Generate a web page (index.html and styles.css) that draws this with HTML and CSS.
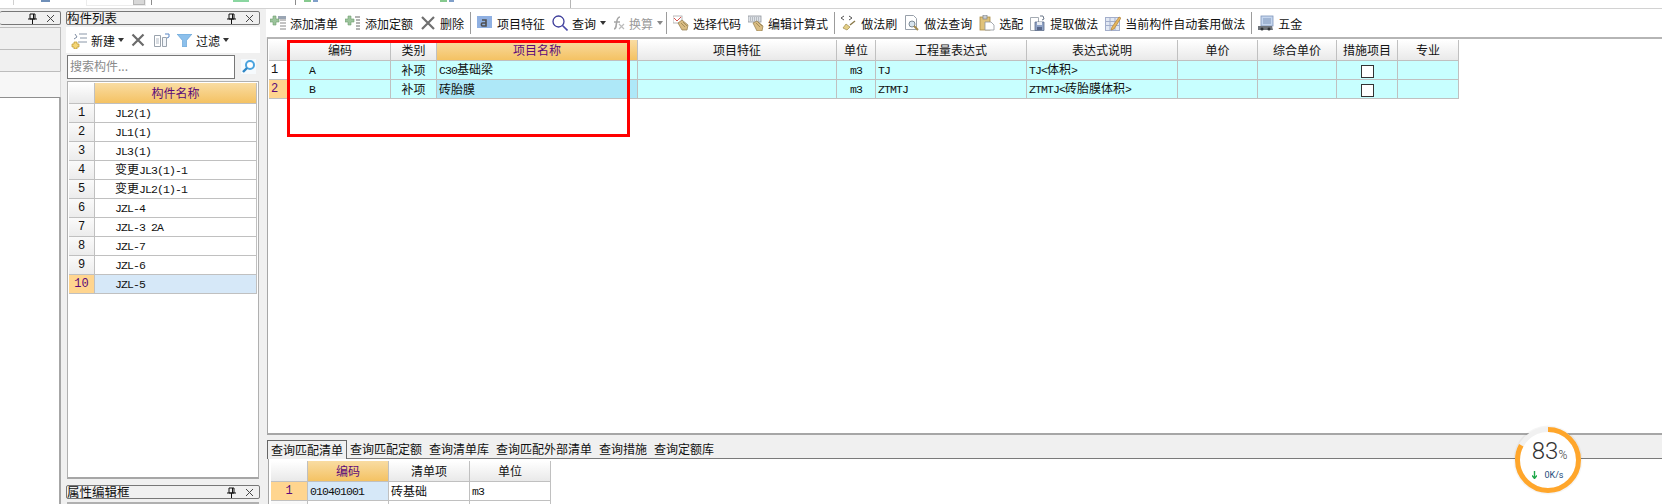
FILE: index.html
```html
<!DOCTYPE html>
<html>
<head>
    <title>构件做法</title>
    <link rel="stylesheet" href="styles.css">
</head>
<body>
    <div class="top-strip">
        <span class="strip-line strip-a"></span>
        <span class="strip-blob strip-b"></span>
        <span class="strip-box strip-c"><span class="strip-btn"></span></span>
        <span class="strip-line strip-d"></span>
        <span class="strip-green strip-e"></span>
        <span class="strip-line strip-f"></span>
        <span class="strip-mini strip-g"></span>
        <span class="strip-mini strip-h"></span>
        <span class="strip-line strip-i"></span>
    </div>

    <div class="workspace">
        <!-- left dock -->
        <div class="side-left">
            <div class="title-bar">
                <span class="title-text"></span>
                <svg class="pin" width="9" height="11" viewBox="0 0 9 11"><path d="M2 1h5v5H2zM0 6h9M4.5 6v5M5.5 1v5" fill="none" stroke="#111" stroke-width="1"/></svg>
                <svg class="close" width="9" height="9" viewBox="0 0 9 9"><path d="M1 1l7 7M8 1L1 8" stroke="#444" stroke-width="1"/></svg>
            </div>
            <div class="side-band"></div>
            <div class="side-band"></div>
            <div class="side-light"></div>
            <div class="side-white"></div>
        </div>

        <!-- component list -->
        <div class="list-panel">
            <div class="title-bar">
                <span class="title-text">构件列表</span>
                <svg class="pin" width="9" height="11" viewBox="0 0 9 11"><path d="M2 1h5v5H2zM0 6h9M4.5 6v5M5.5 1v5" fill="none" stroke="#111" stroke-width="1"/></svg>
                <svg class="close" width="9" height="9" viewBox="0 0 9 9"><path d="M1 1l7 7M8 1L1 8" stroke="#444" stroke-width="1"/></svg>
            </div>
            <div class="list-tools">
                <svg class="tool-new" width="17" height="17" viewBox="0 0 17 17">
                    <path d="M8 2h8M9 6h7M7 10h9" stroke="#8a97a8" fill="none"/>
                    <path d="M4 2l2 3-3 2" stroke="#7d8ba0" fill="none"/>
                    <path d="M3 10h3v2h2v3H6v2H3v-2H1v-3h2z" fill="#f5d676" stroke="#b9952e" stroke-width="0.7"/>
                </svg>
                <span class="tool-label">新建</span>
                <span class="arrow list-arrow"></span>
                <svg class="tool-x" width="14" height="14" viewBox="0 0 14 14"><path d="M1.5 1.5l11 11M12.5 1.5l-11 11" stroke="#6b6b6b" stroke-width="2.2"/></svg>
                <svg class="tool-copy" width="16" height="14" viewBox="0 0 16 14">
                    <path d="M.5 2.5h6v11h-6z" fill="#fff" stroke="#9aa3ad"/>
                    <path d="M2 6h3M2 8h3M2 10h3" stroke="#b4bcc6"/>
                    <path d="M8.5 4.5h4v9h-4z" fill="#f3f6fa" stroke="#9aa3ad"/>
                    <path d="M11 1h4v3l-2 1" fill="none" stroke="#5a87c5"/>
                </svg>
                <svg class="tool-filter" width="15" height="13" viewBox="0 0 15 13"><path d="M0 0h15L9.5 6.5V13h-4V6.5z" fill="#8cc0ec" stroke="#5a9bd0" stroke-width="0.6"/></svg>
                <span class="tool-label">过滤</span>
                <span class="arrow list-arrow"></span>
            </div>
            <div class="search-row">
                <div class="search-input">搜索构件...</div>
                <svg class="search-icon" width="15" height="15" viewBox="0 0 15 15"><rect width="15" height="15" fill="#f6fafd"/><circle cx="9" cy="6" r="4" fill="#fff" stroke="#4aa3de" stroke-width="2"/><path d="M6 9l-4 4" stroke="#2f86c5" stroke-width="2.4"/></svg>
            </div>
            <div class="list-box">
                <table class="grid list-grid">
                    <colgroup><col class="w26"><col class="w162"></colgroup>
                    <tr class="head"><th></th><th class="on">构件名称</th></tr>
                    <tr><td class="num mid">1</td><td class="name"><span class="m">JL2(1)</span></td></tr>
                    <tr><td class="num mid">2</td><td class="name"><span class="m">JL1(1)</span></td></tr>
                    <tr><td class="num mid">3</td><td class="name"><span class="m">JL3(1)</span></td></tr>
                    <tr><td class="num mid">4</td><td class="name">变更<span class="m">JL3(1)-1</span></td></tr>
                    <tr><td class="num mid">5</td><td class="name">变更<span class="m">JL2(1)-1</span></td></tr>
                    <tr><td class="num mid">6</td><td class="name"><span class="m">JZL-4</span></td></tr>
                    <tr><td class="num mid">7</td><td class="name"><span class="m">JZL-3 2A</span></td></tr>
                    <tr><td class="num mid">8</td><td class="name"><span class="m">JZL-7</span></td></tr>
                    <tr><td class="num mid">9</td><td class="name"><span class="m">JZL-6</span></td></tr>
                    <tr class="picked"><td class="num mid cur">10</td><td class="name sel"><span class="m">JZL-5</span></td></tr>
                </table>
            </div>
            <div class="title-bar title-low">
                <span class="title-text">属性编辑框</span>
                <svg class="pin" width="9" height="11" viewBox="0 0 9 11"><path d="M2 1h5v5H2zM0 6h9M4.5 6v5M5.5 1v5" fill="none" stroke="#111" stroke-width="1"/></svg>
                <svg class="close" width="9" height="9" viewBox="0 0 9 9"><path d="M1 1l7 7M8 1L1 8" stroke="#444" stroke-width="1"/></svg>
            </div>
            <div class="props-box"></div>
        </div>

        <!-- main area -->
        <div class="main">
            <div class="toolbar">
                <div class="tool">
                    <svg width="16" height="16" viewBox="0 0 16 16"><path d="M10 5h6M10 8h6M10 11h6M10 14h6" stroke="#888"/><rect x="8" y="1" width="8" height="3" fill="#9aa5b3"/><path d="M3 1h3v3h3v3H6v3H3V7H0V4h3z" fill="#9cc49c" stroke="#6f9f6f" stroke-width="0.6"/></svg>
                    <span>添加清单</span>
                </div>
                <div class="tool">
                    <svg width="16" height="16" viewBox="0 0 16 16"><path d="M10 2h5M11 5h4M11 8h4M11 11h4M11 14h4" stroke="#666"/><path d="M3 1h3v3h3v3H6v3H3V7H0V4h3z" fill="#9cc49c" stroke="#6f9f6f" stroke-width="0.6"/></svg>
                    <span>添加定额</span>
                </div>
                <div class="tool">
                    <svg width="16" height="16" viewBox="0 0 16 16"><path d="M2 2l12 12M14 2L2 14" stroke="#707070" stroke-width="2.2"/></svg>
                    <span>删除</span>
                </div>
                <i class="sep"></i>
                <div class="tool">
                    <svg width="16" height="16" viewBox="0 0 16 16"><rect y="1" width="15" height="12" fill="#8fb0e2"/><path d="M5 5h4v6H5.500C4 11 4 8 5.500 8H9" fill="none" stroke="#4f4f4f" stroke-width="1.6"/></svg>
                    <span>项目特征</span>
                </div>
                <div class="tool">
                    <svg width="16" height="16" viewBox="0 0 16 16"><circle cx="6.5" cy="6.5" r="5.5" fill="none" stroke="#3c3c9a" stroke-width="1.3"/><path d="M10.500 10.500l5 5" stroke="#4a4aa8" stroke-width="1.6"/></svg>
                    <span>查询</span>
                    <span class="arrow"></span>
                </div>
                <div class="tool tool-off">
                    <svg class="fx" width="14" height="16" viewBox="0 0 14 16"><path d="M3 14c2 0 2-2 2.500-6S7 2 9 2M3 7h6" fill="none" stroke="#a6a6a6" stroke-width="1.6"/><path d="M8 9l5 5M13 9l-5 5" stroke="#bcbcbc" stroke-width="1.2"/></svg>
                    <span>换算</span>
                    <span class="arrow arrow-end"></span>
                </div>
                <i class="sep"></i>
                <div class="tool">
                    <svg width="16" height="16" viewBox="0 0 16 16"><rect x="0" y="1" width="9" height="7" fill="#fff" stroke="#a9a9a9" stroke-width="0.8"/><path d="M1 3l3 3 4-4" fill="none" stroke="#d8524e"/><path d="M5 8l4-3 6 5-1 5H9z" fill="#d9bc82" stroke="#8f7a4c" stroke-width="0.7"/><path d="M8 8l4 4M10 7l4 4" stroke="#8f7a4c" stroke-width="0.7"/></svg>
                    <span>选择代码</span>
                </div>
                <div class="tool">
                    <svg width="16" height="16" viewBox="0 0 16 16"><rect x="0" y="1" width="13" height="6" fill="#dfe3e8" stroke="#8f959c" stroke-width="0.8"/><path d="M2 3h9M2 5h9" stroke="#8f959c" stroke-dasharray="1 1"/><path d="M5 8l4-2 6 5-1 5H9z" fill="#d9bc82" stroke="#8f7a4c" stroke-width="0.7"/><path d="M8 8l4 4M10 7l4 4" stroke="#8f7a4c" stroke-width="0.7"/></svg>
                    <span>编辑计算式</span>
                </div>
                <i class="sep"></i>
                <div class="tool">
                    <svg width="16" height="16" viewBox="0 0 16 16"><path d="M3 1L0 3l3 2M8 1l3 2-3 2" fill="none" stroke="#555"/><path d="M14 6L9 10" stroke="#8a7a4a" stroke-width="1.5"/><path d="M5 9l4 3-3 3-4-2z" fill="#e4cf86" stroke="#9d8a4c" stroke-width="0.7"/></svg>
                    <span>做法刷</span>
                </div>
                <div class="tool">
                    <svg width="16" height="16" viewBox="0 0 16 16"><path d="M1.500.5h8l3 3v11h-11z" fill="#fff" stroke="#98a0aa"/><circle cx="8" cy="9" r="3" fill="#d7e4ee" stroke="#7d8a96"/><path d="M10 11l4 4" stroke="#a28a50" stroke-width="2"/></svg>
                    <span>做法查询</span>
                </div>
                <div class="tool">
                    <svg width="16" height="16" viewBox="0 0 16 16"><rect x="1" y="2" width="10" height="13" fill="#e0c27a" stroke="#a88b45" stroke-width="0.8"/><rect x="4" y="0" width="4" height="4" fill="#c9cdd2" stroke="#7d8288" stroke-width="0.7"/><path d="M6 7h6l3 3v5H6z" fill="#fff" stroke="#8f959c" stroke-width="0.8"/></svg>
                    <span>选配</span>
                </div>
                <div class="tool">
                    <svg width="16" height="16" viewBox="0 0 16 16"><path d="M.5 2.500h8v13h-8z" fill="#fff" stroke="#a4abb3"/><path d="M5 7h9v8.500H5z" fill="#8fa2c6" stroke="#606f8c" stroke-width="0.8"/><rect x="7" y="7" width="5" height="3" fill="#e9edf3"/><rect x="7" y="12" width="5" height="3" fill="#59688a"/><path d="M10 1l3 0 1 3-2 1" fill="none" stroke="#6a7688"/></svg>
                    <span>提取做法</span>
                </div>
                <div class="tool">
                    <svg width="16" height="16" viewBox="0 0 16 16"><rect x=".5" y="2.500" width="14" height="13" fill="#e2e8f3" stroke="#a3aecb"/><path d="M.5 6.500h14M.5 10.500h14M5 2.500v13M10 2.500v13" stroke="#a3aecb"/><path d="M7 12l7-10 2 1-7 11-3 1z" fill="#e5b65e" stroke="#a9752a" stroke-width="0.6"/></svg>
                    <span>当前构件自动套用做法</span>
                </div>
                <i class="sep"></i>
                <div class="tool">
                    <svg width="16" height="16" viewBox="0 0 16 16"><rect x="3" y="1" width="12" height="10" fill="#c5d6ee" stroke="#7d95ba" stroke-width="0.8"/><path d="M5 4h8M5 6h8M5 8h8" stroke="#7d95ba"/><path d="M0 11h14l1 4H0z" fill="#6f747a"/><circle cx="4" cy="14" r="1.500" fill="#2f3337"/><circle cx="11" cy="14" r="1.500" fill="#2f3337"/></svg>
                    <span>五金</span>
                </div>
            </div>

            <div class="grid-pane">
                <table class="grid main-grid">
                    <colgroup>
                        <col class="w21"><col class="w101"><col class="w46"><col class="w201"><col class="w199"><col class="w39">
                        <col class="w151"><col class="w151"><col class="w80"><col class="w79"><col class="w61"><col class="w61">
                    </colgroup>
                    <tr class="head">
                        <th></th><th>编码</th><th>类别</th><th class="on">项目名称</th><th>项目特征</th><th>单位</th>
                        <th>工程量表达式</th><th>表达式说明</th><th>单价</th><th>综合单价</th><th>措施项目</th><th>专业</th>
                    </tr>
                    <tr class="row">
                        <td class="num">1</td><td class="code"><span class="m">A</span></td><td class="mid">补项</td>
                        <td><span class="m">C30</span>基础梁</td><td></td><td class="mid"><span class="m">m3</span></td>
                        <td><span class="m">TJ</span></td><td><span class="m">TJ&lt;</span>体积<span class="m">&gt;</span></td><td></td><td></td>
                        <td class="mid"><span class="check"></span></td><td></td>
                    </tr>
                    <tr class="row">
                        <td class="num cur">2</td><td class="code"><span class="m">B</span></td><td class="mid">补项</td>
                        <td class="focus">砖胎膜</td><td></td><td class="mid"><span class="m">m3</span></td>
                        <td><span class="m">ZTMTJ</span></td><td><span class="m">ZTMTJ&lt;</span>砖胎膜体积<span class="m">&gt;</span></td><td></td><td></td>
                        <td class="mid"><span class="check"></span></td><td></td>
                    </tr>
                </table>
                <div class="red-box"></div>
            </div>

            <div class="tabs">
                <span class="tab active">查询匹配清单</span>
                <span class="tab">查询匹配定额</span>
                <span class="tab">查询清单库</span>
                <span class="tab">查询匹配外部清单</span>
                <span class="tab">查询措施</span>
                <span class="tab">查询定额库</span>
            </div>

            <div class="query-pane">
                <table class="grid query-grid">
                    <colgroup><col class="w37"><col class="w81"><col class="w81"><col class="w81"></colgroup>
                    <tr class="head"><th></th><th class="on">编码</th><th>清单项</th><th>单位</th></tr>
                    <tr><td class="num mid cur">1</td><td class="sel"><span class="m">010401001</span></td><td>砖基础</td><td><span class="m">m3</span></td></tr>
                    <tr><td class="num"></td><td></td><td></td><td></td></tr>
                </table>
            </div>
        </div>
    </div>

    <!-- floating speed ball -->
    <div class="speed-ball">
        <svg class="ring" width="70" height="70" viewBox="0 0 70 70">
            <circle cx="35" cy="35" r="34.500" fill="rgba(0,0,0,0.04)"/>
            <circle cx="35" cy="35" r="30.500" fill="#fff" stroke="#f1f1f1" stroke-width="5"/>
            <circle class="ring-value" cx="35" cy="35" r="30.500" fill="none" stroke="#ffa62b" stroke-width="5" pathLength="100" stroke-dasharray="83 17"/>
        </svg>
        <div class="ball-text">
            <div class="ball-pct">83<small>%</small></div>
            <div class="ball-rate">
                <svg width="5" height="8" viewBox="0 0 5 8"><path d="M2.500 0v7M0 4.500l2.500 3 2.500-3" fill="none" stroke="#1fa84a" stroke-width="1.400"/></svg>
                <span>0K/s</span>
            </div>
        </div>
    </div>
</body>
</html>
```

FILE: styles.css
```css
* {
    box-sizing: border-box;
}
html, body {
    margin: 0;
    padding: 0;
    height: 100%;
    overflow: hidden;
}
body {
    width: 1662px;
    height: 504px;
    position: relative;
    background-color: #f0f0f0;
    color: #111;
    font-family: "Noto Sans CJK SC", "Liberation Sans", sans-serif;
    font-size: 12px;
}

/* bits of the window cut off at the top */
.top-strip {
    height: 9px;
    background-color: #fff;
    border-bottom: 1px solid #d2d2d2;
    display: flex;
    align-items: flex-start;
}
.strip-line {
    width: 1px;
    height: 5px;
    background-color: #8c8c8c;
}
.strip-a { margin-left: 13px; background-color: #d0d0d0; }
.strip-b { margin-left: 27px; }
.strip-blob {
    width: 9px;
    height: 2px;
    background-color: #6f8fb8;
}
.strip-box {
    margin-left: 36px;
    width: 60px;
    height: 6px;
    border: 1px solid #ececec;
    border-top: none;
    display: flex;
    justify-content: flex-end;
}
.strip-btn {
    width: 12px;
    height: 5px;
    background-color: #d8d8d8;
    border: 1px solid #b5b5b5;
    border-top: none;
}
.strip-d { margin-left: 5px; }
.strip-green {
    margin-left: 81px;
    width: 16px;
    height: 2px;
    background-color: #8ad6a0;
}
.strip-f { margin-left: 46px; }
.strip-mini {
    width: 14px;
    height: 2px;
    background: linear-gradient(90deg, #86c98e 50%, #fff 50%, #fff 65%, #7f9fc9 65%);
}
.strip-g { margin-left: 8px; }
.strip-h { margin-left: 122px; }
.strip-i { margin-left: 116px; height: 8px; background-color: #b5b5b5; }

.workspace {
    display: flex;
    height: 495px;
}

/* docks */
.title-bar {
    height: 14px;
    border: 1px solid #777;
    border-radius: 2px;
    display: flex;
    align-items: center;
    line-height: 12px;
    background-color: #f0f0f0;
}
.title-text {
    flex: 1;
    font-size: 12.5px;
    white-space: nowrap;
}
.pin { margin-right: 9px; }
.close { margin-right: 5px; }

.side-left {
    width: 61px;
    padding-top: 2px;
    display: flex;
    flex-direction: column;
}
.side-left .title-bar {
    border-left: none;
    margin-bottom: 2px;
}
.side-band {
    height: 22px;
    border-top: 1px solid #bdbdbd;
    border-right: 1px solid #bdbdbd;
}
.side-light {
    height: 27px;
    background-color: #f7f7f7;
    border-top: 1px solid #bdbdbd;
    border-right: 1px solid #d8d8d8;
    border-bottom: 1px solid #8f8f8f;
}
.side-white {
    flex: 1;
    background-color: #fff;
    border-right: 2px solid #a6a6a6;
}

.list-panel {
    width: 194px;
    margin-left: 5px;
    padding-top: 2px;
    display: flex;
    flex-direction: column;
}
.list-tools {
    height: 26px;
    margin-top: 2px;
    background-color: #fff;
    display: flex;
    align-items: center;
    padding-left: 5px;
}
.tool-label { margin-left: 3px; }
.list-arrow { margin-left: 3px; }
.tool-x { margin-left: 9px; }
.tool-copy { margin-left: 9px; }
.tool-filter { margin-left: 7px; }
.list-tools .tool-filter + .tool-label { margin-left: 4px; }
.search-row {
    height: 27px;
    display: flex;
    align-items: center;
    padding-left: 1px;
}
.search-input {
    width: 168px;
    height: 24px;
    border: 1px solid #777;
    background-color: #fff;
    color: #8a8a8a;
    font-size: 12px;
    line-height: 20px;
    padding-left: 2px;
}
.search-icon { margin-left: 6px; }
.list-box {
    height: 398px;
    margin: 1px 1px 0;
    background-color: #fff;
    border: 1px solid #b0b0b0;
    border-bottom: 2px solid #a6a6a6;
    padding: 1px;
}
.title-low { margin-top: 6px; }
.props-box {
    flex: 1;
    margin: 3px 1px 0;
    background-color: #fff;
    border: 1px solid #b0b0b0;
}

/* grids */
.grid {
    border-collapse: separate;
    border-spacing: 0;
    table-layout: fixed;
    width: 0;
}
.grid th, .grid td {
    height: 19px;
    padding: 0 0 0 2px;
    border-right: 1px solid #c0c0c0;
    border-bottom: 1px solid #c0c0c0;
    font-weight: normal;
    font-size: 12px;
    line-height: 14px;
    white-space: nowrap;
    overflow: hidden;
}
.grid th {
    height: 21px;
    padding: 0;
    text-align: center;
    background: linear-gradient(#ffffff, #e9e9e9);
}
.grid th.on {
    color: #5b0a7a;
    background: linear-gradient(#f9dca2, #f4c263);
}
.grid .num {
    font-family: "Liberation Mono", monospace;
    background: linear-gradient(#fafafa, #ececec);
}
.grid .num.cur {
    background: #ffd58f;
    color: #5b0a7a;
}
.grid .mid {
    text-align: center;
    padding-left: 0;
}
.grid .sel {
    background-color: #d6e8f8;
}
.m {
    font-family: "Liberation Mono", monospace;
    font-size: 11.500px;
    letter-spacing: -0.9px;
}
.name { padding-left: 20px !important; }

.w21 { width: 21px; }
.w26 { width: 26px; }
.w37 { width: 37px; }
.w39 { width: 39px; }
.w46 { width: 46px; }
.w61 { width: 61px; }
.w79 { width: 79px; }
.w80 { width: 80px; }
.w81 { width: 81px; }
.w101 { width: 101px; }
.w151 { width: 151px; }
.w162 { width: 162px; }
.w199 { width: 199px; }
.w201 { width: 201px; }

/* main area */
.main {
    flex: 1;
    margin-left: 6px;
    display: flex;
    flex-direction: column;
    min-width: 0;
}
.toolbar {
    height: 28px;
    background-color: #fff;
    display: flex;
    align-items: center;
    gap: 7px;
    padding-left: 4px;
}
.tool {
    display: flex;
    align-items: center;
    gap: 4px;
    white-space: nowrap;
}
.tool-off {
    color: #9a9a9a;
}
.sep {
    width: 1px;
    height: 22px;
    margin: 0 -1px;
    background-color: #9c9c9c;
}
.arrow {
    width: 0;
    height: 0;
    border-left: 3.500px solid transparent;
    border-right: 3.500px solid transparent;
    border-top: 4px solid #333;
    margin-right: -2px;
}
.tool-off .arrow {
    border-top-color: #888;
}
.arrow-end {
    margin-right: -3px;
}
.fx { margin-left: 0; }

.grid-pane {
    height: 398px;
    margin-left: 1px;
    padding: 1px 0 0 1px;
    background-color: #fff;
    border-top: 2px solid #b5b5b5;
    border-left: 1px solid #a6a6a6;
    border-bottom: 2px solid #a6a6a6;
    position: relative;
}
.main-grid .row td {
    background-color: #c8ffff;
}
.main-grid .row .num {
    background: #fff;
}
.main-grid .row .num.cur {
    background: #ffd58f;
}
.main-grid .row .focus {
    background-color: #aee8f8;
}
.main-grid .code {
    padding-left: 19px;
}
.check {
    display: inline-block;
    width: 13px;
    height: 13px;
    margin-top: 3px;
    border: 1px solid #333;
    background-color: #fff;
    vertical-align: top;
}
.red-box {
    position: absolute;
    left: 19px;
    top: 1px;
    width: 343px;
    height: 97px;
    border: 3px solid #f00;
}

.tabs {
    height: 24px;
    margin-left: 1px;
    display: flex;
    align-items: flex-end;
    gap: 7px;
    border-bottom: 1px solid #7a7a7a;
    padding-left: 0;
}
.tab {
    height: 18px;
    line-height: 18px;
    white-space: nowrap;
}
.tab.active {
    width: 80px;
    height: 19px;
    margin-right: -4px;
    margin-bottom: -1px;
    text-align: center;
    background-color: #f0f0f0;
    border: 1px solid #666;
    border-bottom: none;
}
.query-pane {
    flex: 1;
    margin-left: 2px;
    padding: 2px 0 0 2px;
    background-color: #fff;
    border-left: 1px solid #a6a6a6;
    overflow: hidden;
}

/* floating ball, sits over the tab bar */
.speed-ball {
    position: absolute;
    left: 1513px;
    top: 425px;
    width: 70px;
    height: 70px;
}
.ring {
    display: block;
}
.ring-value {
    transform: rotate(-90deg);
    transform-origin: 35px 35px;
}
.ball-text {
    position: absolute;
    inset: 0;
    display: flex;
    flex-direction: column;
    align-items: center;
    justify-content: center;
    font-family: Roboto, "Liberation Sans", sans-serif;
}
.ball-pct {
    font-size: 24px;
    font-weight: 300;
    line-height: 24px;
    color: #333;
    margin-left: 3px;
}
.ball-pct small {
    font-size: 12px;
}
.ball-rate {
    display: flex;
    align-items: center;
    gap: 7px;
    font-size: 9px;
    line-height: 12px;
    color: #1d4a7a;
    margin-top: 2px;
}
```
